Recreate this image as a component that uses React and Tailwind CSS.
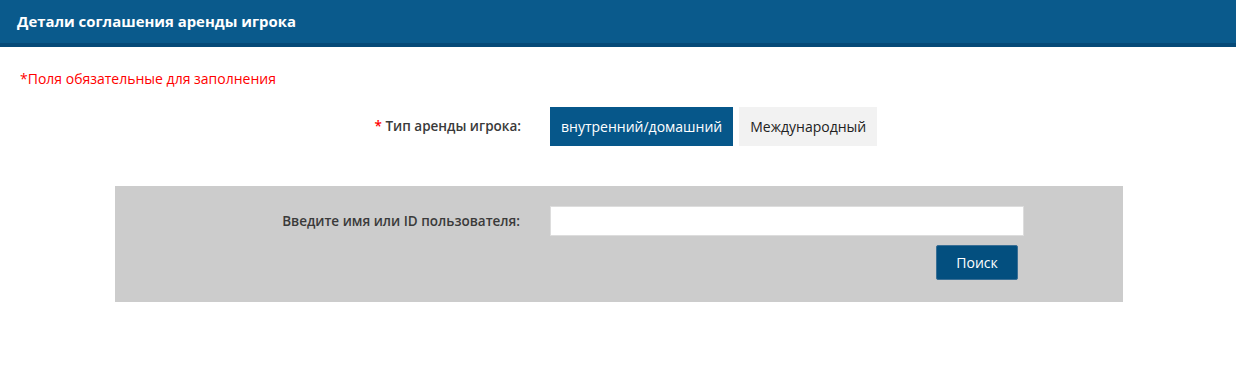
export default function App() {
  return (
    <div className="w-[1236px] h-[380px] bg-white font-['Open_Sans',sans-serif] text-[14px] text-[#333]">
      <div className="h-[47px] bg-[#0a5a8c] border-b-[4px] border-[#064a78] flex items-center pl-[17px]">
        <h1 className="text-white text-[14.9px] font-bold leading-none">Детали соглашения аренды игрока</h1>
      </div>
      <div className="pt-[22px] pl-[20px] text-[#ff0000] leading-[20px]">*Поля обязательные для заполнения</div>
      <div className="flex items-center mt-[18px]">
        <div className="w-[521px] text-right font-semibold text-[13.5px] text-[#3a3a3a]">
          <span className="text-[#ff0000]">* </span>Тип аренды игрока:
        </div>
        <div className="flex ml-[29px] gap-[6px]">
          <button className="h-[39px] px-[11px] bg-[#06578a] text-white">внутренний/домашний</button>
          <button className="h-[39px] px-[11px] bg-[#f2f2f2] text-[#222]">Международный</button>
        </div>
      </div>
      <div className="ml-[115px] w-[1008px] mt-[40px] h-[116px] bg-[#cccccc] pt-[20px]">
        <div className="flex">
          <div className="w-[405px] text-right font-semibold text-[13.5px] text-[#3a3a3a] h-[30px] flex items-center justify-end">Введите имя или ID пользователя:</div>
          <div className="ml-[30px] w-[474px]">
            <input className="block w-[474px] h-[30px] bg-white border border-[#dddddd] outline-none" />
            <div className="flex justify-end mt-[9px] pr-[6px]">
              <button className="w-[82px] h-[35px] bg-[#034f7f] border border-[#3a6f95] rounded-[2px] text-white">Поиск</button>
            </div>
          </div>
        </div>
      </div>
    </div>
  );
}
